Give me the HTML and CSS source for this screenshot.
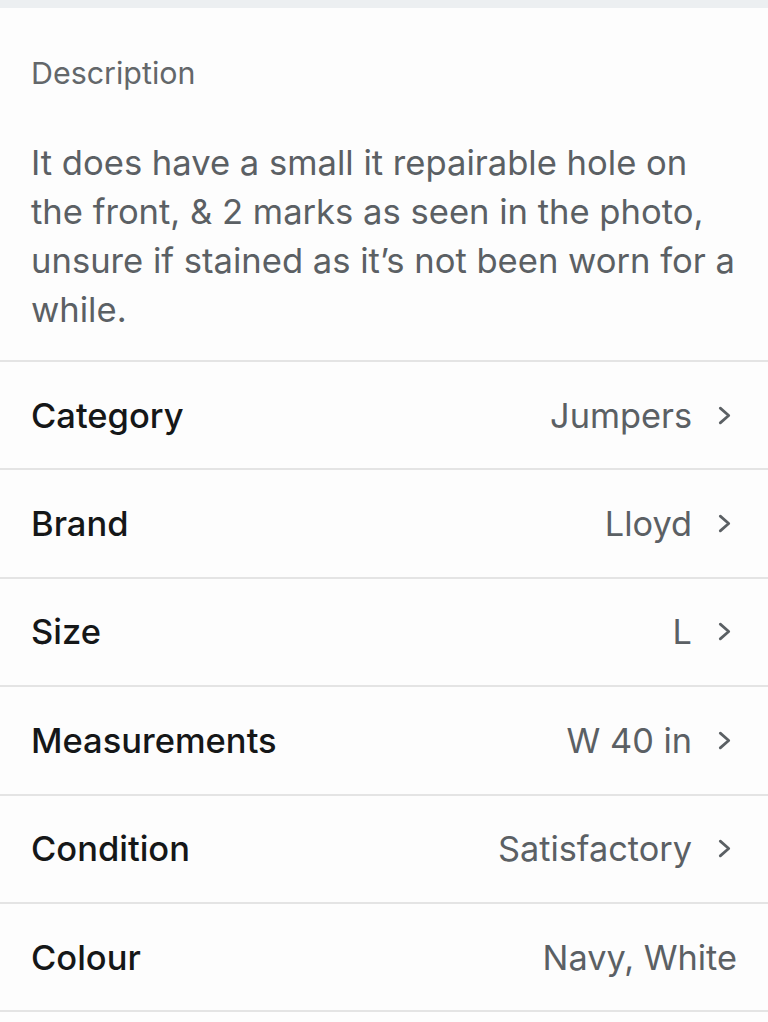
FILE: index.html
```html
<!DOCTYPE html>
<html>
<head>
<meta charset="utf-8">
<link rel="stylesheet" href="styles.css">
</head>
<body>
<div class="topbar"></div>
<section class="desc">
  <div class="desc-label">Description</div>
  <p class="desc-text">It does have a small it repairable hole on the front, &amp; 2 marks as seen in the photo, unsure if stained as it’s not been worn for a while.</p>
</section>
<ul class="attrs">
  <li class="row"><span class="label">Category</span><span class="value">Jumpers<svg class="chev" viewBox="0 0 12 18"><path d="M2 2 L10 9 L2 16"/></svg></span></li>
  <li class="row"><span class="label">Brand</span><span class="value">Lloyd<svg class="chev" viewBox="0 0 12 18"><path d="M2 2 L10 9 L2 16"/></svg></span></li>
  <li class="row"><span class="label">Size</span><span class="value">L<svg class="chev" viewBox="0 0 12 18"><path d="M2 2 L10 9 L2 16"/></svg></span></li>
  <li class="row"><span class="label">Measurements</span><span class="value">W 40 in<svg class="chev" viewBox="0 0 12 18"><path d="M2 2 L10 9 L2 16"/></svg></span></li>
  <li class="row"><span class="label">Condition</span><span class="value">Satisfactory<svg class="chev" viewBox="0 0 12 18"><path d="M2 2 L10 9 L2 16"/></svg></span></li>
  <li class="row"><span class="label">Colour</span><span class="value nochev">Navy, White</span></li>
</ul>
</body>
</html>
```
FILE: styles.css
```css
html, body {
  margin: 0;
  padding: 0;
  background: #fdfdfd;
  font-family: "Inter", sans-serif;
}
.topbar {
  height: 8px;
  background: #eceff1;
}
.desc {
  padding: 45px 31px 26px 31px;
}
.desc-label {
  font-size: 30.4px;
  line-height: 40px;
  color: #63676a;
}
.desc-text {
  margin: 45px 0 0 0;
  font-size: 34.6px;
  line-height: 49px;
  color: #5b6064;
}
.attrs {
  list-style: none;
  margin: 0;
  padding: 0;
  border-top: 2px solid #e4e4e4;
}
.row {
  height: 106.4px;
  border-bottom: 2px solid #e4e4e4;
  display: flex;
  align-items: center;
  justify-content: space-between;
  padding: 0 37px 0 31px;
}
.label {
  font-weight: 500;
  font-size: 34.5px;
  color: #151718;
}
.value {
  display: flex;
  align-items: center;
  gap: 26px;
  font-size: 34.3px;
  color: #5b6064;
}
.value.nochev {
  margin-right: -6px;
}
.chev {
  width: 13px;
  height: 19px;
  fill: none;
  stroke: #5b6064;
  stroke-width: 2.6;
  stroke-linecap: round;
  stroke-linejoin: round;
}
```
